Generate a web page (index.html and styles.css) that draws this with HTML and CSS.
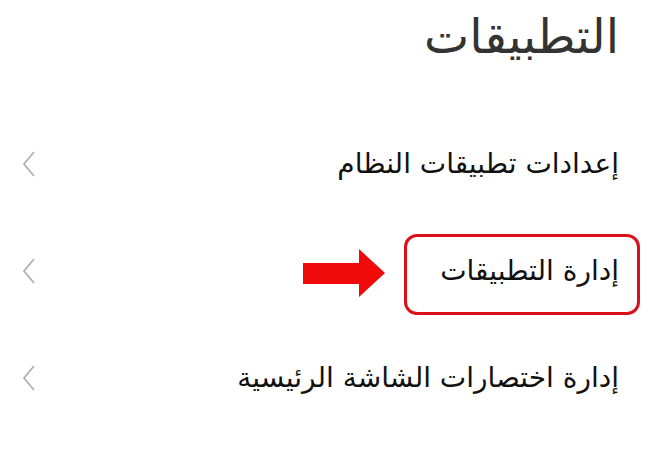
FILE: index.html
```html
<!DOCTYPE html>
<html lang="ar" dir="rtl">
<head>
<meta charset="utf-8">
<link rel="stylesheet" href="styles.css">
</head>
<body>
<main class="screen">
  <h1 class="title">التطبيقات</h1>
  <ul class="list">
    <li class="row">
      <span class="label">إعدادات تطبيقات النظام</span>
      <svg class="chev" viewBox="0 0 14 28" width="14" height="28"><path d="M12 2 L2 14 L12 26" fill="none" stroke="#b0b0b0" stroke-width="1.8"/></svg>
    </li>
    <li class="row">
      <span class="label highlight">إدارة التطبيقات
        <svg class="arrow" viewBox="0 0 82 48" width="82" height="48"><polygon points="0,14 56,14 56,0 82,24 56,48 56,35 0,35" fill="#f00a0a"/></svg>
      </span>
      <svg class="chev" viewBox="0 0 14 28" width="14" height="28"><path d="M12 2 L2 14 L12 26" fill="none" stroke="#b0b0b0" stroke-width="1.8"/></svg>
    </li>
    <li class="row">
      <span class="label">إدارة اختصارات الشاشة الرئيسية</span>
      <svg class="chev" viewBox="0 0 14 28" width="14" height="28"><path d="M12 2 L2 14 L12 26" fill="none" stroke="#b0b0b0" stroke-width="1.8"/></svg>
    </li>
  </ul>
</main>
</body>
</html>
```
FILE: styles.css
```css
html, body {
  margin: 0;
  padding: 0;
  background: #ffffff;
}
.screen {
  width: 665px;
  height: 450px;
  box-sizing: border-box;
  padding: 0 46px 0 22px;
  font-family: "DejaVu Sans", "Noto Sans", sans-serif;
  color: #1a1a1a;
  overflow: hidden;
}
.title {
  margin: 0;
  height: 110px;
  padding-top: 0;
  box-sizing: border-box;
  font-size: 48px;
  font-weight: normal;
  line-height: 72px;
  color: #333333;
}
.list {
  list-style: none;
  margin: 0;
  padding: 0;
}
.row {
  height: 107px;
  display: flex;
  align-items: center;
  justify-content: space-between;
  margin-top: -54px;
  margin-bottom: 54px;
}
.row:first-child {
  margin-top: 0;
}
.label {
  font-size: 28px;
  line-height: 40px;
  color: #111;
  position: relative;
}
.chev {
  display: block;
}
.highlight::after {
  content: "";
  position: absolute;
  top: -17px;
  bottom: -24px;
  right: -21px;
  left: -36px;
  border: 3px solid #dc1018;
  border-radius: 13px;
}
.arrow {
  position: absolute;
  top: -2px;
  left: -137px;
}
```
